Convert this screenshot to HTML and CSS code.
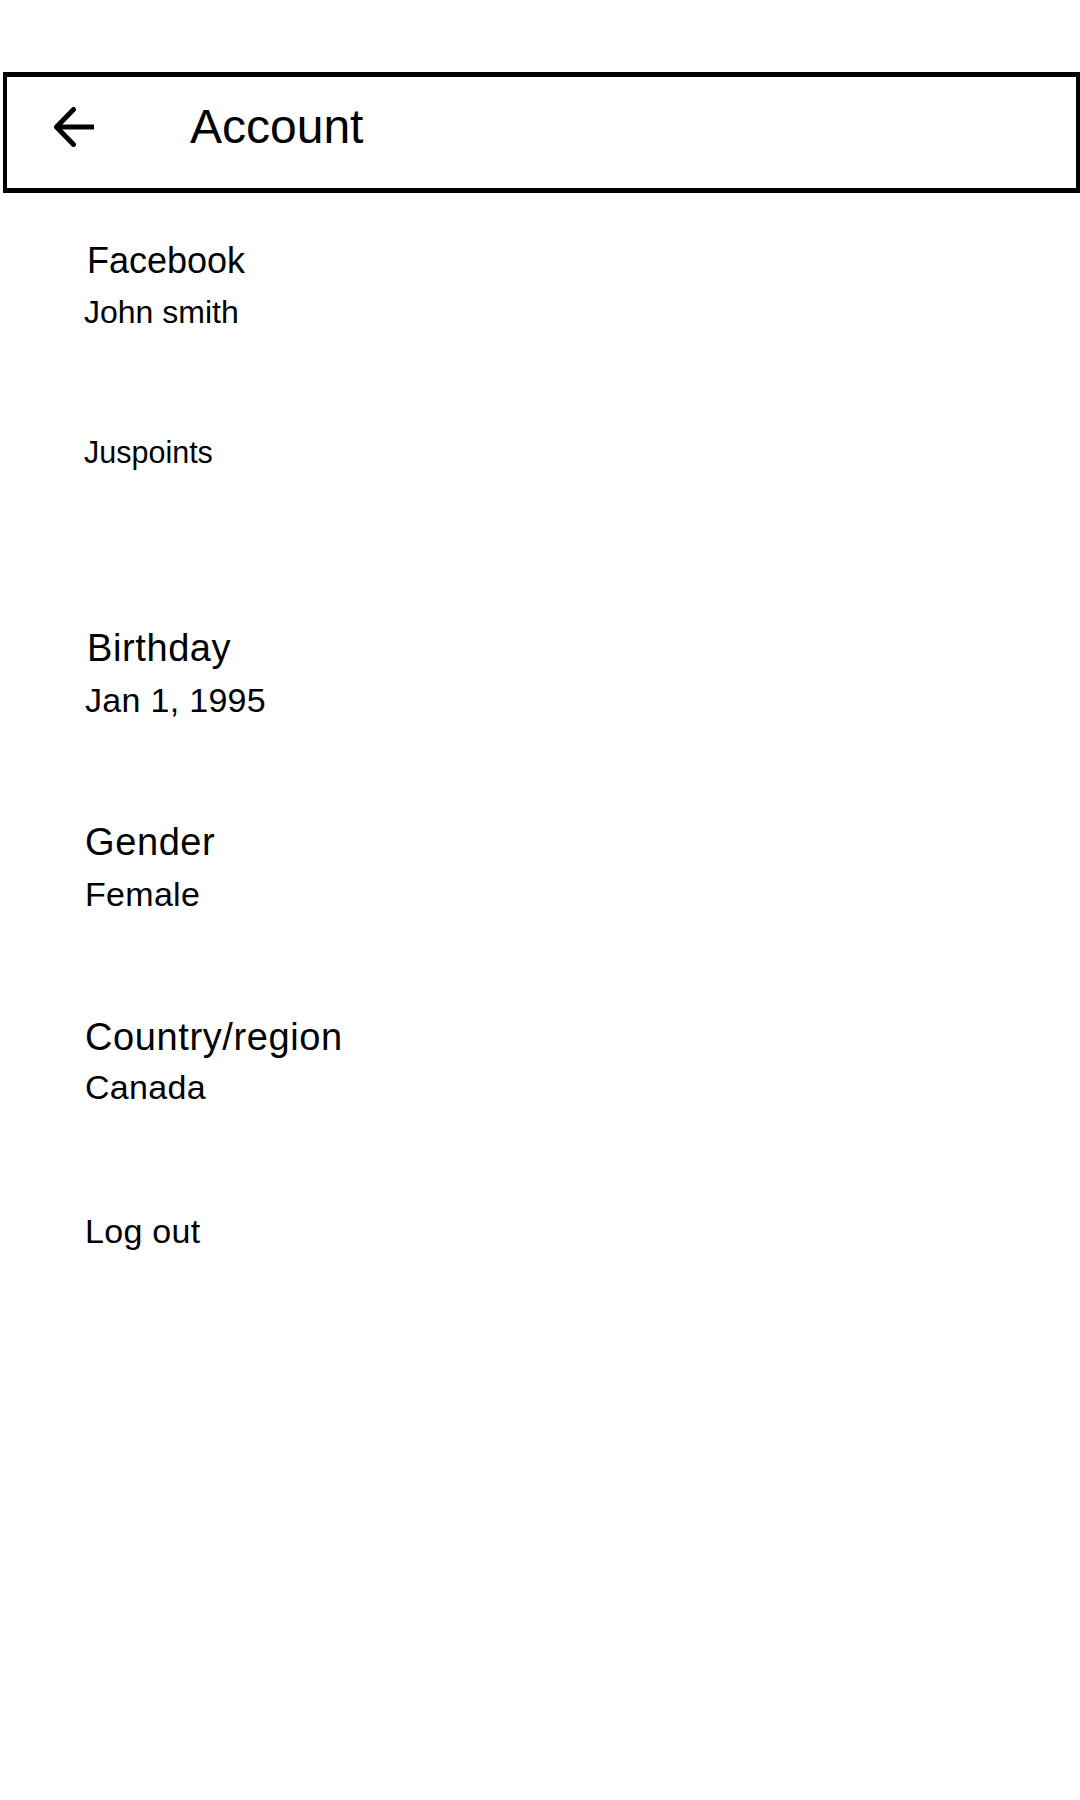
FILE: index.html
```html
<!DOCTYPE html>
<html lang="en">
<head>
<meta charset="utf-8">
<title>Account</title>
<link rel="stylesheet" href="styles.css">
</head>
<body>
  <header class="appbar">
    <svg class="back-icon" width="40" height="40" viewBox="0 0 40 40" aria-hidden="true">
      <path d="M3 20H40" fill="none" stroke="#000" stroke-width="5" stroke-linecap="butt"/>
      <path d="M19.5 2.5L2.5 20L19.5 37.5" fill="none" stroke="#000" stroke-width="5" stroke-linecap="round" stroke-linejoin="round"/>
    </svg>
    <h1 class="appbar-title">Account</h1>
  </header>

  <main class="settings">
    <section class="item item-facebook">
      <div class="item-title title-small">Facebook</div>
      <div class="item-value value-name">John smith</div>
    </section>

    <section class="item item-points">
      <div class="item-value value-points">Juspoints</div>
    </section>

    <section class="item item-birthday">
      <div class="item-title">Birthday</div>
      <div class="item-value">Jan 1, 1995</div>
    </section>

    <section class="item item-gender">
      <div class="item-title">Gender</div>
      <div class="item-value">Female</div>
    </section>

    <section class="item item-country">
      <div class="item-title">Country/region</div>
      <div class="item-value tight">Canada</div>
    </section>

    <section class="item item-logout">
      <div class="item-value">Log out</div>
    </section>
  </main>
</body>
</html>
```

FILE: styles.css
```css
html, body {
  margin: 0;
  padding: 0;
  background: #ffffff;
}

body {
  font-family: "Liberation Sans", Arial, sans-serif;
  color: #000000;
  width: 1080px;
}

.appbar {
  box-sizing: border-box;
  margin-top: 72px;
  margin-left: 3px;
  width: 1077px;
  height: 121px;
  border: 4px solid #000;
  border-top-width: 5px;
  border-bottom-width: 5px;
  display: flex;
  align-items: center;
  padding-left: 47px;
  padding-bottom: 12px;
}

.back-icon {
  display: block;
  flex: none;
}

.appbar-title {
  margin: 0 0 0 96px;
  font-size: 48px;
  line-height: 56px;
  font-weight: 400;
}

.settings {
  padding-left: 84px;
}

.item-title {
  font-size: 38px;
  line-height: 44px;
  letter-spacing: 0.6px;
  margin-left: 1px;
}

.item-value {
  font-size: 34px;
  line-height: 39px;
  letter-spacing: 0.3px;
  margin-top: 10.5px;
  margin-left: 1px;
}

.item-value.tight {
  margin-top: 9px;
}

.title-small {
  font-size: 36px;
  line-height: 41px;
  letter-spacing: 0;
  margin-left: 3px;
}

.value-name {
  font-size: 32px;
  line-height: 37px;
  letter-spacing: 0;
  margin-left: 0;
}

.value-points {
  font-size: 30.5px;
  line-height: 35px;
  letter-spacing: 0;
  margin-left: 0;
}

.item-facebook .item-value {
  margin-top: 13px;
}

.item-facebook {
  margin-top: 47px;
}

.item-points {
  margin-top: 103.5px;
}

.item-points .item-value {
  margin-top: 0;
}

.item-birthday {
  margin-top: 156.5px;
}

.item-birthday .item-title {
  margin-left: 3px;
}

.item-gender {
  margin-top: 100.5px;
}

.item-country {
  margin-top: 101.5px;
}

.item-logout {
  margin-top: 104.5px;
}

.item-logout .item-value {
  margin-top: 0;
}
```
